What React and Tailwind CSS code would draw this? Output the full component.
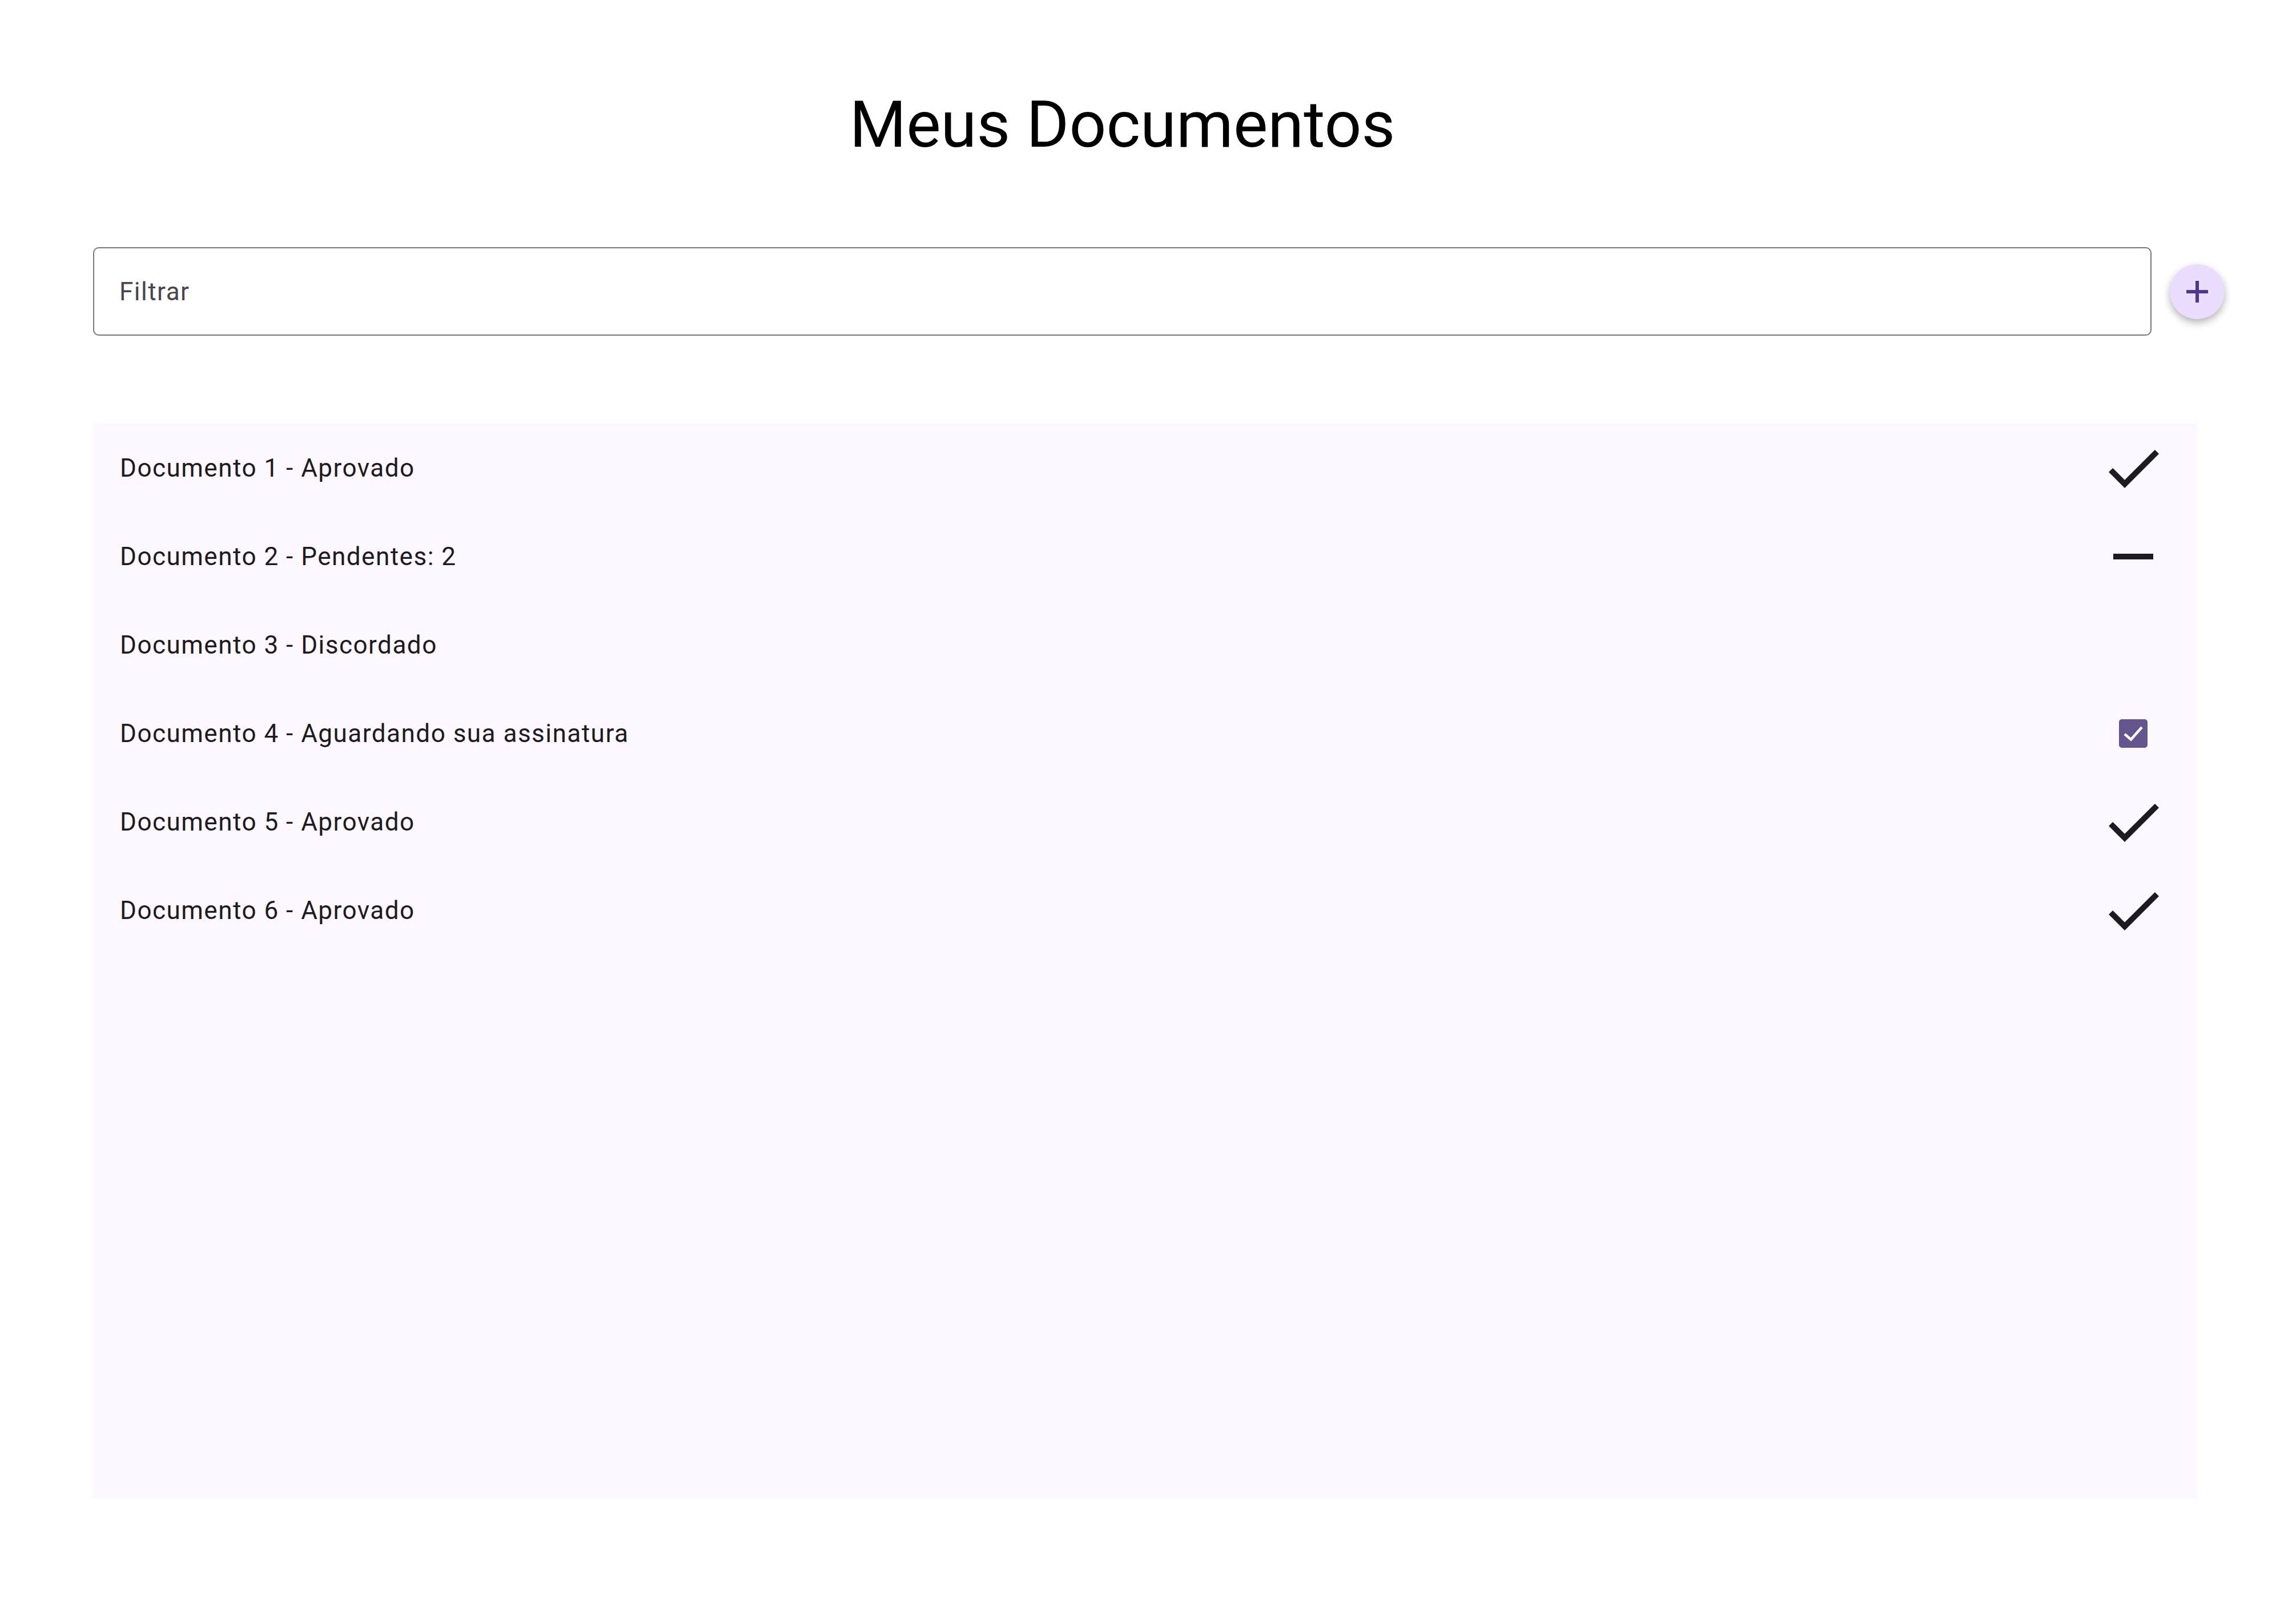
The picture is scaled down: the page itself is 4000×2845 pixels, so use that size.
import { useState } from "react";

const DOCS = [
  { name: "Documento 1 - Aprovado", status: "approved" },
  { name: "Documento 2 - Pendentes: 2", status: "pending" },
  { name: "Documento 3 - Discordado", status: "rejected" },
  { name: "Documento 4 - Aguardando sua assinatura", status: "sign" },
  { name: "Documento 5 - Aprovado", status: "approved" },
  { name: "Documento 6 - Aprovado", status: "approved" },
];

function StatusIcon({ status }) {
  if (status === "approved") {
    return (
      <svg viewBox="0 0 24 24" className="w-[120px] h-[120px]" fill="#1D1B20">
        <path d="M9 16.17L4.83 12l-1.42 1.41L9 19 21 7l-1.41-1.41z" />
      </svg>
    );
  }
  if (status === "pending") {
    return (
      <svg viewBox="0 0 24 24" className="w-[120px] h-[120px]" fill="#1D1B20">
        <path d="M19 13H5v-2h14v2z" />
      </svg>
    );
  }
  if (status === "sign") {
    return (
      <div className="w-[50px] h-[50px] rounded-[5px] bg-[#65558F] flex items-center justify-center">
        <svg viewBox="0 0 50 50" className="w-[50px] h-[50px]">
          <path d="M10 26 L21 35.5 L40 14" fill="none" stroke="#fff" strokeWidth="4.5" />
        </svg>
      </div>
    );
  }
  return null;
}

export default function App() {
  const [filter, setFilter] = useState("");
  const docs = DOCS.filter(d => d.name.toLowerCase().includes(filter.toLowerCase()));

  return (
    <div className="w-[4000px] h-[2845px] bg-white font-['Roboto',sans-serif] text-[#1D1B20]">
      {/* Title, centred over the filter field */}
      <div className="w-[3605px] ml-[163px] pt-[148px] h-[433px]">
        <h1 className="text-center text-[114px] leading-[140px] text-black font-normal">
          Meus Documentos
        </h1>
      </div>

      {/* Filter + add button */}
      <div className="flex items-center ml-[163px] gap-[32px]">
        <div className="w-[3605px] h-[155px] border-[2.5px] border-[#79747E] rounded-[10px] flex items-center px-[44px]">
          <input
            value={filter}
            onChange={e => setFilter(e.target.value)}
            placeholder="Filtrar"
            className="w-full bg-transparent outline-none text-[44px] tracking-[1.5px] text-[#1D1B20] placeholder:text-[#49454F]"
          />
        </div>
        <button className="w-[96px] h-[96px] rounded-full bg-[#EADDFF] shadow-[0_6px_14px_rgba(0,0,0,0.3)] flex items-center justify-center">
          <svg viewBox="0 0 40 40" className="w-[40px] h-[40px]">
            <path d="M20 1 V39 M1 20 H39" stroke="#4F378B" strokeWidth="6" />
          </svg>
        </button>
      </div>

      {/* Document list */}
      <div className="mt-[154px] ml-[163px] w-[3685px] h-[1883px] bg-[#FDF7FF]">
        {docs.map(d => (
          <div key={d.name} className="h-[155px] flex items-center justify-between pl-[47px] pr-[52px]">
            <span className="text-[44px] tracking-[1.5px]">{d.name}</span>
            <div className="w-[120px] h-[120px] flex items-center justify-center">
              <StatusIcon status={d.status} />
            </div>
          </div>
        ))}
      </div>
    </div>
  );
}
